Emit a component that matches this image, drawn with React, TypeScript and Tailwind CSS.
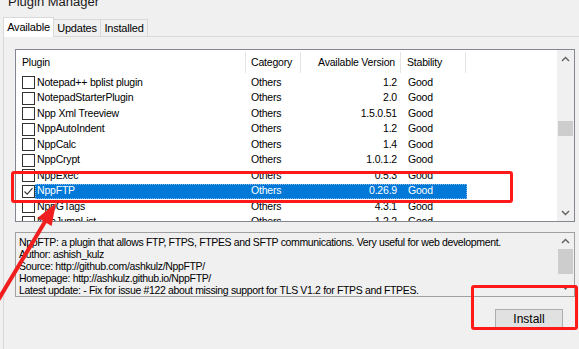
import React from "react";

type Row = { name: string; cat: string; ver: string; stab: string; checked?: boolean; selected?: boolean };

const rows: Row[] = [
  { name: "Notepad++ bplist plugin", cat: "Others", ver: "1.2", stab: "Good" },
  { name: "NotepadStarterPlugin", cat: "Others", ver: "2.0", stab: "Good" },
  { name: "Npp Xml Treeview", cat: "Others", ver: "1.5.0.51", stab: "Good" },
  { name: "NppAutoIndent", cat: "Others", ver: "1.2", stab: "Good" },
  { name: "NppCalc", cat: "Others", ver: "1.4", stab: "Good" },
  { name: "NppCrypt", cat: "Others", ver: "1.0.1.2", stab: "Good" },
  { name: "NppExec", cat: "Others", ver: "0.5.3", stab: "Good" },
  { name: "NppFTP", cat: "Others", ver: "0.26.9", stab: "Good", checked: true, selected: true },
  { name: "NppGTags", cat: "Others", ver: "4.3.1", stab: "Good" },
  { name: "NppJumpList", cat: "Others", ver: "1.2.2", stab: "Good" },
];

function Chevron({ up }: { up?: boolean }) {
  return (
    <svg width="9" height="6" viewBox="0 0 9 6" className="block">
      {up ? (
        <path d="M1 5 L4.5 1.5 L8 5" fill="none" stroke="#606060" strokeWidth="1.4" />
      ) : (
        <path d="M1 1 L4.5 4.5 L8 1" fill="none" stroke="#606060" strokeWidth="1.4" />
      )}
    </svg>
  );
}

function Checkbox({ checked }: { checked?: boolean }) {
  return (
    <div className="w-[13px] h-[13px] border border-[#333333] bg-white flex items-center justify-center shrink-0">
      {checked && (
        <svg width="11" height="11" viewBox="0 0 11 11" className="block">
          <path d="M1.5 5.5 L4.2 8.2 L9.5 2.2" fill="none" stroke="#333" strokeWidth="1.1" />
        </svg>
      )}
    </div>
  );
}

export default function App() {
  return (
    <div
      className="relative w-[579px] h-[349px] overflow-hidden bg-[#f0f0f0] text-[10.5px] tracking-[-0.2px] text-black flex flex-col"
      style={{ fontFamily: '"Liberation Sans", Arial, sans-serif' }}
    >
      {/* Title */}
      <div className="h-[23px] -mt-[6px] pl-[8px] text-[13px] tracking-normal leading-[16px] text-[#1a1a1a] shrink-0">Plugin Manager</div>
      {/* Tabs */}
      <div className="flex items-end h-[19px] pl-[3px] shrink-0 relative z-10 text-[11px]">
        <div className="w-[51px] h-[20px] -mb-px border border-b-0 border-[#d9d9d9] bg-white flex items-center justify-center pb-[1px]">
          Available
        </div>
        <div className="w-[47px] h-[17px] border border-b-0 border-l-0 border-[#d9d9d9] bg-[#f0f0f0] flex items-center justify-center">
          Updates
        </div>
        <div className="w-[47px] h-[17px] border border-b-0 border-l-0 border-[#d9d9d9] bg-[#f0f0f0] flex items-center justify-center">
          Installed
        </div>
      </div>
      {/* Panel */}
      <div className="flex-1 ml-[3px] border-l border-t border-[#d9d9d9] bg-[#f0f0f0] pl-[11px] pt-[12px] flex flex-col">
        {/* List */}
        <div className="w-[560px] h-[173px] border border-[#828790] bg-white flex">
          <div className="flex-1 overflow-hidden flex flex-col">
            <div className="h-[25px] flex shrink-0">
              <div className="w-[230px] pl-[6px] flex items-center border-r border-[#e5e5e5] my-[2px]">Plugin</div>
              <div className="w-[55px] pl-[5px] flex items-center border-r border-[#e5e5e5] my-[2px]">Category</div>
              <div className="w-[100px] pr-[5px] flex items-center justify-end border-r border-[#e5e5e5] my-[2px]">Available Version</div>
              <div className="w-[65px] pl-[6px] flex items-center border-r border-[#e5e5e5] my-[2px]">Stability</div>
            </div>
            {rows.map((r) => (
              <div key={r.name} className="h-[15.5px] flex items-center shrink-0">
                <div className="w-[19px] pl-[6px] shrink-0">
                  <Checkbox checked={r.checked} />
                </div>
                <div
                  className={
                    "flex h-full items-center " +
                    (r.selected ? "bg-[#0078d7] text-white outline outline-1 outline-dotted outline-[#7fb5e8] -outline-offset-1" : "")
                  }
                >
                  <div className="w-[211px] pl-[2px] whitespace-nowrap">{r.name}</div>
                  <div className="w-[56px] pl-[5px]">{r.cat}</div>
                  <div className="w-[100px] pr-[5px] text-right">{r.ver}</div>
                  <div className="w-[65px] pl-[6px]">{r.stab}</div>
                </div>
              </div>
            ))}
          </div>
          {/* scrollbar */}
          <div className="w-[17px] bg-[#f0f0f0] flex flex-col items-center">
            <div className="h-[17px] flex items-center justify-center">
              <Chevron up />
            </div>
            <div className="h-[54px]" />
            <div className="w-[15px] h-[15px] bg-[#cdcdcd]" />
            <div className="flex-1" />
            <div className="h-[17px] flex items-center justify-center">
              <Chevron />
            </div>
          </div>
        </div>
        {/* Description */}
        <div className="mt-[10px] w-[560px] h-[65px] border border-[#a0a0a0] bg-[#f0f0f0] flex">
          <div className="flex-1 pl-[3px] pt-[3px] leading-[12px] tracking-[-0.35px] whitespace-nowrap overflow-hidden">
            <div>NppFTP: a plugin that allows FTP, FTPS, FTPES and SFTP communications. Very useful for web development.</div>
            <div>Author: ashish_kulz</div>
            <div>Source: http://github.com/ashkulz/NppFTP/</div>
            <div>Homepage: http://ashkulz.github.io/NppFTP/</div>
            <div>Latest update: - Fix for issue #122 about missing support for TLS V1.2 for FTPS and FTPES.</div>
          </div>
          <div className="w-[17px] bg-[#f0f0f0] flex flex-col items-center">
            <div className="h-[16px] flex items-center justify-center">
              <Chevron up />
            </div>
            <div className="w-[15px] h-[25px] bg-[#cdcdcd]" />
            <div className="flex-1" />
            <div className="h-[10px] flex items-start justify-center">
              <svg width="7" height="4" viewBox="0 0 7 4"><path d="M0 0 L7 0 L3.5 4 Z" fill="#606060" /></svg>
            </div>
          </div>
        </div>
        {/* Install */}
        <div className="w-[560px] flex justify-end pr-[12px] mt-[12px]">
          <button className="w-[68px] h-[20px] bg-[#e1e1e1] border border-[#adadad] text-[12px] tracking-normal leading-none flex items-center justify-center">
            Install
          </button>
        </div>
      </div>

      {/* Red annotations */}
      <div className="absolute left-[11px] top-[171px] w-[502px] h-[32px] border-[3px] border-[#ff1a1a] rounded-[3px]" />
      <div className="absolute left-[471px] top-[285px] w-[107px] h-[45px] border-[3px] border-[#ff1a1a] rounded-[3px]" />
      <svg className="absolute left-0 top-0" width="579" height="349" viewBox="0 0 579 349">
        <line x1="-3" y1="302" x2="46" y2="220" stroke="#f01e1e" strokeWidth="4" />
        <polygon points="56,203 37.8,217.8 51.6,226" fill="#f01e1e" />
      </svg>
    </div>
  );
}
